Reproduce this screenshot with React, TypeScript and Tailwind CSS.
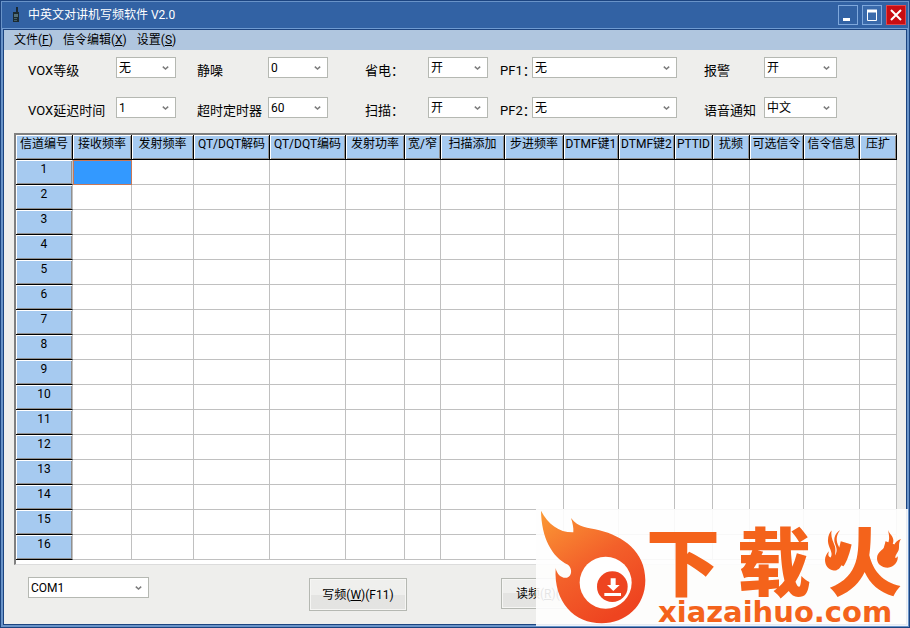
import { useState } from "react"
import type { ReactNode } from "react"

interface Column {
  label: string
  width: number
}

const columns: Column[] = [
  { label: "信道编号", width: 57 },
  { label: "接收频率", width: 59 },
  { label: "发射频率", width: 62 },
  { label: "QT/DQT解码", width: 76 },
  { label: "QT/DQT编码", width: 76 },
  { label: "发射功率", width: 59 },
  { label: "宽/窄", width: 36 },
  { label: "扫描添加", width: 64 },
  { label: "步进频率", width: 59 },
  { label: "DTMF键1", width: 55 },
  { label: "DTMF键2", width: 56 },
  { label: "PTTID", width: 38 },
  { label: "扰频", width: 37 },
  { label: "可选信令", width: 54 },
  { label: "信令信息", width: 56 },
  { label: "压扩", width: 37 },
]

const totalWidth = columns.reduce((sum, col) => sum + col.width, 0)
const channels = Array.from({ length: 16 }, (_, i) => i + 1)

const headCell =
  "h-[25px] border-r border-b border-b-black bg-[#a6caf0] p-0 pb-[6px] text-center font-normal whitespace-nowrap shadow-[inset_1px_1px_0_#ffffff,inset_-1px_-1px_0_#909090]"

function Combo({ id, options, className, label }: { id: string; options: string[]; className: string; label?: string }) {
  const [value, setValue] = useState(options[0])

  return (
    <div className={`relative ${className}`}>
      <select
        id={id}
        aria-label={label}
        value={value}
        onChange={(e) => setValue(e.target.value)}
        className="block h-[21px] w-full appearance-none border border-[#b5b8b2] bg-white pr-5 pl-[2px] text-[12px] leading-4 text-black outline-none"
      >
        {options.map((option) => (
          <option key={option}>{option}</option>
        ))}
      </select>
      <svg viewBox="0 0 7 4" className="pointer-events-none absolute top-[9px] right-[7px] h-1 w-[7px]" fill="none" stroke="#7c7c7c" strokeWidth="1.5">
        <path d="M.8 .6 3.5 3 6.2 .6" />
      </svg>
    </div>
  )
}

function FieldLabel({ htmlFor, children }: { htmlFor: string; children: ReactNode }) {
  return (
    <label htmlFor={htmlFor} className="pt-[6px] text-[13px] leading-4 whitespace-nowrap">
      {children}
    </label>
  )
}

function RadioIcon() {
  return (
    <svg viewBox="0 0 8 16" className="h-4 w-2">
      <path d="M4 0h2v6H4z" fill="#1b2a35" />
      <path d="M1 5h6v10H1z" fill="#1c2b30" />
      <path d="M2 7h4v3H2z" fill="#53707a" />
      <path d="M2 11h3v1H2zM2 13h3v1H2z" fill="#43606a" />
    </svg>
  )
}

function TitleBar() {
  return (
    <header className="flex h-[27px] items-center border-b border-[#6f9bd2] bg-[#3262a4] pr-[2px] pl-[10px] text-white">
      <RadioIcon />
      <h1 className="ml-2 flex-1 text-[12px] leading-4">中英文对讲机写频软件 V2.0</h1>
      <div className="flex gap-1">
        <button type="button" aria-label="最小化" className="h-5 w-5 border border-[#7fa8dc] bg-[#3262a4]">
          <svg viewBox="0 0 18 18" className="h-full w-full">
            <path d="M4 12h7v3H4z" fill="#fff" />
          </svg>
        </button>
        <button type="button" aria-label="最大化" className="h-5 w-5 border border-[#7fa8dc] bg-[#3a6aab]">
          <svg viewBox="0 0 18 18" className="h-full w-full" fill="none" stroke="#fff">
            <path d="M4.500 5.500h9v9h-9z" />
            <path d="M4 5h10" strokeWidth="3" />
          </svg>
        </button>
        <button type="button" aria-label="关闭" className="h-5 w-5 border border-[#e0484c] bg-[#c80d12]">
          <svg viewBox="0 0 18 18" className="h-full w-full" stroke="#fff" strokeWidth="2">
            <path d="m4 4 10 10M14 4 4 14" />
          </svg>
        </button>
      </div>
    </header>
  )
}

function MenuBar() {
  return (
    <nav className="flex h-5 items-center gap-[10px] bg-[#b0c6df] pl-[10px] text-[12px] leading-4">
      <button type="button">文件(<u>F</u>)</button>
      <button type="button">信令编辑(<u>X</u>)</button>
      <button type="button">设置(<u>S</u>)</button>
    </nav>
  )
}

function Settings() {
  return (
    <div className="grid grid-cols-[88px_81px_71px_97px_63px_72px_32px_1fr_60px_73px] gap-y-[18px] pt-[7px] pr-[69px] pl-6">
      <FieldLabel htmlFor="vox">VOX等级</FieldLabel>
      <Combo id="vox" options={["无", "1", "2", "3"]} className="w-[60px]" />
      <FieldLabel htmlFor="squelch">静噪</FieldLabel>
      <Combo id="squelch" options={["0", "1", "2", "3"]} className="w-[60px]" />
      <FieldLabel htmlFor="saver">省电：</FieldLabel>
      <Combo id="saver" options={["开", "关"]} className="w-[60px]" />
      <FieldLabel htmlFor="pf1">PF1：</FieldLabel>
      <Combo id="pf1" options={["无", "扫描", "报警"]} className="mr-[27px]" />
      <FieldLabel htmlFor="alarm">报警</FieldLabel>
      <Combo id="alarm" options={["开", "关"]} className="w-full" />

      <FieldLabel htmlFor="vox-delay">VOX延迟时间</FieldLabel>
      <Combo id="vox-delay" options={["1", "2", "3"]} className="w-[60px]" />
      <FieldLabel htmlFor="timeout">超时定时器</FieldLabel>
      <Combo id="timeout" options={["60", "120", "180"]} className="w-[60px]" />
      <FieldLabel htmlFor="scan">扫描：</FieldLabel>
      <Combo id="scan" options={["开", "关"]} className="w-[60px]" />
      <FieldLabel htmlFor="pf2">PF2：</FieldLabel>
      <Combo id="pf2" options={["无", "扫描", "报警"]} className="mr-[27px]" />
      <FieldLabel htmlFor="voice">语音通知</FieldLabel>
      <Combo id="voice" options={["中文", "英文"]} className="w-full" />
    </div>
  )
}

function ChannelTable() {
  const [selected, setSelected] = useState("1-1")

  return (
    <div className="mt-[14px] mr-[9px] ml-[10px] border-t-2 border-l-2 border-b border-t-[#808080] border-l-[#808080] border-b-[#dcdcdc] bg-white pb-1">
      <table className="w-full table-fixed border-separate border-spacing-0 text-[12px] leading-4">
        <colgroup>
          {columns.map((col) => (
            <col key={col.label} style={{ width: `${(col.width / totalWidth) * 100}%` }} />
          ))}
        </colgroup>
        <thead>
          <tr>
            {columns.map((col) => (
              <th key={col.label} scope="col" className={`${headCell} border-r-black`}>
                <span className="-mx-2">{col.label}</span>
              </th>
            ))}
          </tr>
        </thead>
        <tbody>
          {channels.map((channel) => (
            <tr key={channel}>
              <th scope="row" className={`${headCell} border-r-[#c0c0c0]`}>{channel}</th>
              {columns.slice(1).map((col, i) => {
                const key = `${channel}-${i + 1}`
                return (
                  <td
                    key={col.label}
                    onClick={() => setSelected(key)}
                    className={
                      selected === key
                        ? "border border-[#c87858] bg-[#3399ff] p-0"
                        : "border-r border-b border-[#c0c0c0] p-0"
                    }
                  />
                )
              })}
            </tr>
          ))}
        </tbody>
      </table>
    </div>
  )
}

const actionButton =
  "w-[98px] border border-[#b5b8b2] bg-linear-to-b from-[#efefed] from-50% to-[#e4e4e2] to-50% text-[12px] leading-4 whitespace-nowrap shadow-[inset_0_0_0_1px_#f6f6f4]"

function Actions() {
  return (
    <div className="flex items-start pt-3 pb-[13px] pl-6">
      <Combo id="port" label="串口" options={["COM1", "COM2", "COM3"]} className="w-[121px]" />
      <button type="button" className={`mt-px ml-[160px] h-[33px] ${actionButton}`}>
        写频(<u>W</u>)(F11)
      </button>
      <button type="button" className={`mt-px ml-[94px] h-[31px] ${actionButton}`}>
        读频(<u>R</u>)(F12)
      </button>
    </div>
  )
}

function Watermark() {
  return (
    <div className="pointer-events-none absolute right-px bottom-px flex h-[117px] w-[372px] bg-[#fefefe]/90 text-[#f4631b]">
      <svg viewBox="138 27 330 351" className="h-[117px] w-[110px] shrink-0">
        <defs>
          <linearGradient id="flame" x1="0" y1="0" x2="0.6" y2="1">
            <stop offset="0" stopColor="#fb9a35" />
            <stop offset="0.55" stopColor="#f3602a" />
            <stop offset="1" stopColor="#ee4420" />
          </linearGradient>
        </defs>
        <path
          d="M153 32C174 73 208 98 250 97C251 83 248 70 243 54C265 84 293 82 328 91C398 108 466 154 466 241C466 320 406 370 335 370C254 370 190 307 197 204C201 224 215 236 231 233C247 227 247 205 234 194C185 171 154 111 153 32Z"
          fill="url(#flame)"
        />
        <circle cx="347" cy="248" r="78" fill="#fff" />
        <circle cx="367" cy="260" r="46" fill="#ee4420" />
        <path d="M362 235h15v20h12l-19 18-19-18h11zM343 279h50v9h-50z" fill="#fff" />
      </svg>
      <div className="relative flex-1 pt-[19px] pr-[6px]">
        <p className="flex justify-between text-[74px] leading-[74px] font-black">
          <span>下</span>
          <span>载</span>
          <span>火</span>
        </p>
        <p className="pl-3 font-['DejaVu_Sans'] text-[29px] leading-5 font-bold">xiazaihuo.com</p>
        <svg viewBox="404 90 54 122" className="absolute top-[21px] right-[65px] h-[41px] w-[18px]" fill="currentColor">
          <path d="M449 90C436 107 437 123 445 138C455 154 460 172 455 190C450 206 440 212 430 211C414 209 404 196 404 179C404 169 409 160 416 153C412 163 414 170 421 172C430 156 414 143 413 124C412 108 418 96 424 91C420 110 428 123 434 139C436 149 435 158 434 166C443 151 438 141 433 128C429 112 437 96 449 90Z" />
        </svg>
        <svg viewBox="560 90 72 114" className="absolute top-[21px] right-[7px] h-[38px] w-6" fill="currentColor">
          <path d="M593 90C598 103 608 107 609 120C610 132 602 141 598 152C606 150 611 144 611 137C614 127 622 120 632 117C623 129 628 139 625 150C622 159 614 165 615 174C619 174 622 170 622 167C625 184 611 202 592 203C573 203 560 192 560 175C560 154 584 147 593 130C599 117 596 105 593 90Z" />
        </svg>
      </div>
    </div>
  )
}

export default function App() {
  return (
    <div className="relative flex min-h-screen flex-col border border-[#1c4480] bg-[#6993c8] p-px font-[Roboto,'Noto_Sans_CJK_SC',sans-serif] text-black">
      <TitleBar />
      <main className="mx-px mb-px flex flex-1 flex-col border border-[#1c4480] bg-[#eeeeec]">
        <MenuBar />
        <Settings />
        <ChannelTable />
        <Actions />
      </main>
      <Watermark />
    </div>
  )
}
